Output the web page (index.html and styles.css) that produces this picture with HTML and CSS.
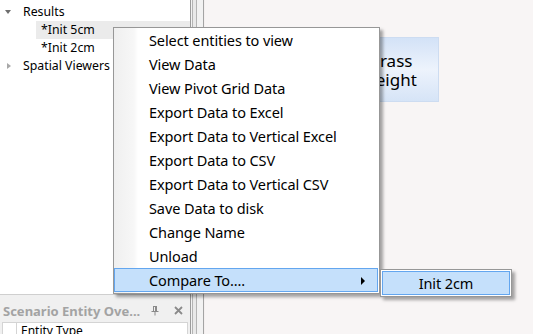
FILE: index.html
```html
<!DOCTYPE html>
<html lang="en">

<head>
    <meta charset="UTF-8">
    <title>Scenario Results</title>
    <link rel="stylesheet" href="styles.css">
</head>

<body>
    <div class="app">
        <div class="left">
            <ul class="tree">
                <li class="row"><span class="exp open"></span>Results</li>
                <li class="row child selected">*Init 5cm</li>
                <li class="row child">*Init 2cm</li>
                <li class="row"><span class="exp closed"></span>Spatial Viewers</li>
            </ul>

            <div class="dock">
                <div class="dock-head">
                    <span class="dock-title">Scenario Entity Ove...</span>
                    <svg class="pin" width="8" height="10" viewBox="0 0 8 10">
                        <path d="M2 0.5h4M2.5 0.5v5M5.5 0.5v5M4.5 1v4.5M0.5 5.5h7M4 5.5v4" stroke="#8a8a8a" fill="none" />
                    </svg>
                    <svg class="close" width="9" height="9" viewBox="0 0 9 9">
                        <path d="M1 1l7 7M8 1l-7 7" stroke="#8a8a8a" stroke-width="1.8" />
                    </svg>
                </div>
                <div class="dock-body">
                    <div class="grid-head">Entity Type</div>
                </div>
            </div>
        </div>

        <div class="splitter"></div>

        <div class="canvas">
            <div class="node">Grass<br>Height</div>
        </div>
    </div>

    <!-- context menu on the selected result -->
    <ul class="menu">
        <li class="item">Select entities to view</li>
        <li class="item">View Data</li>
        <li class="item">View Pivot Grid Data</li>
        <li class="item">Export Data to Excel</li>
        <li class="item">Export Data to Vertical Excel</li>
        <li class="item">Export Data to CSV</li>
        <li class="item">Export Data to Vertical CSV</li>
        <li class="item">Save Data to disk</li>
        <li class="item">Change Name</li>
        <li class="item">Unload</li>
        <li class="item hot">Compare To....<span class="arrow"></span></li>
    </ul>

    <div class="submenu">
        <div class="sub-item">Init 2cm</div>
    </div>
</body>

</html>
```

FILE: styles.css
```css
body {
    margin: 0;
    font-family: "Noto Sans", "Open Sans", sans-serif;
    color: #000;
    overflow: hidden;
}

.app {
    display: flex;
    width: 533px;
    height: 334px;
}

.left {
    width: 190px;
    display: flex;
    flex-direction: column;
    background-color: #fff;
}

.tree {
    flex: 1;
    list-style-type: none;
    margin: 0;
    padding: 3px 0 0 0;
    font-size: 12.3px;
}

.row {
    height: 18px;
    line-height: 18px;
    padding-left: 23px;
    position: relative;
}

.row.child {
    padding-left: 41px;
}

.row.selected {
    margin-left: 36px;
    padding-left: 5px;
    background-color: #ebebeb;
}

.exp {
    position: absolute;
    left: 5px;
    top: 7px;
    width: 0;
    height: 0;
}

.exp.open {
    border-left: 3px solid transparent;
    border-right: 3px solid transparent;
    border-top: 4px solid #6e6e6e;
}

.exp.closed {
    left: 7px;
    top: 6px;
    border-top: 3px solid transparent;
    border-bottom: 3px solid transparent;
    border-left: 4px solid #a8a8a8;
}

.dock {
    height: 39px;
    border-top: 1px solid #cfcfcf;
    background-color: #f0f0f0;
    display: flex;
    flex-direction: column;
}

.dock-head {
    height: 27px;
    display: flex;
    align-items: center;
    padding: 4px 0 0 3px;
    box-sizing: border-box;
}

.dock-title {
    font-weight: bold;
    font-size: 13px;
    color: #a3a3a3;
    flex: 1;
}

.pin {
    margin-right: 15px;
}

.close {
    margin-right: 7px;
}

.dock-body {
    flex: 1;
    margin: 0 2px 0 2px;
    border: 1px solid #d4d4d4;
    border-bottom: none;
    background-color: #fff;
    overflow: hidden;
}

.grid-head {
    margin-left: 13px;
    border-left: 1px solid #d4d4d4;
    padding-left: 4px;
    font-size: 12px;
    line-height: 15px;
}

.splitter {
    width: 15px;
    background: linear-gradient(to right,
            #9c9c9c 0, #9c9c9c 1px,
            #f2f2f2 1px, #f2f2f2 2px,
            #b4b4b4 2px, #b4b4b4 3px,
            #e9e9e9 3px, #e9e9e9 6px,
            #b4b4b4 6px, #b4b4b4 7px,
            #f2f2f2 7px, #f2f2f2 13px,
            #a4a4a4 13px, #a4a4a4 14px,
            #f4f0f0 14px);
}

.canvas {
    flex: 1;
    position: relative;
    background-color: #f8f5f5;
}

.node {
    position: absolute;
    left: 144px;
    top: 37px;
    width: 90px;
    height: 65px;
    padding-right: 8px;
    box-sizing: border-box;
    border: 1px solid #cddcf1;
    background: linear-gradient(to bottom, #d3e2f7, #edf3fc 50%, #d6e4f7);
    font-size: 17px;
    line-height: 19px;
    text-align: center;
    display: flex;
    align-items: center;
    justify-content: center;
}

.menu {
    position: absolute;
    left: 113px;
    top: 27px;
    width: 265px;
    margin: 0;
    padding: 0 0 1px 0;
    list-style-type: none;
    border: 1px solid #979797;
    background: linear-gradient(to right, #efefef 0, #f7f7f7 20px, #fdfdfd 23px, #fff 24px);
    box-shadow: 3px 3px 3px rgba(0, 0, 0, 0.35);
    font-size: 14.5px;
    letter-spacing: -0.1px;
}

.item {
    height: 24px;
    line-height: 24px;
    padding-left: 35px;
    margin-right: 1px;
    position: relative;
}

.item.hot {
    height: 22px;
    line-height: 22px;
    padding-left: 34px;
    border: 1px solid #63a6ef;
    background-color: #c5e0fb;
}

.arrow {
    position: absolute;
    right: 12px;
    top: 8px;
    width: 0;
    height: 0;
    border-top: 4px solid transparent;
    border-bottom: 4px solid transparent;
    border-left: 4px solid #000;
}

.submenu {
    position: absolute;
    left: 380px;
    top: 269px;
    width: 128px;
    padding: 1px;
    border: 1px solid #979797;
    background-color: #fff;
    box-shadow: 3px 3px 3px rgba(0, 0, 0, 0.35);
}

.sub-item {
    height: 22px;
    line-height: 22px;
    border: 1px solid #63a6ef;
    background-color: #c5e0fb;
    text-align: center;
    font-size: 14.5px;
    letter-spacing: -0.1px;
}
```
